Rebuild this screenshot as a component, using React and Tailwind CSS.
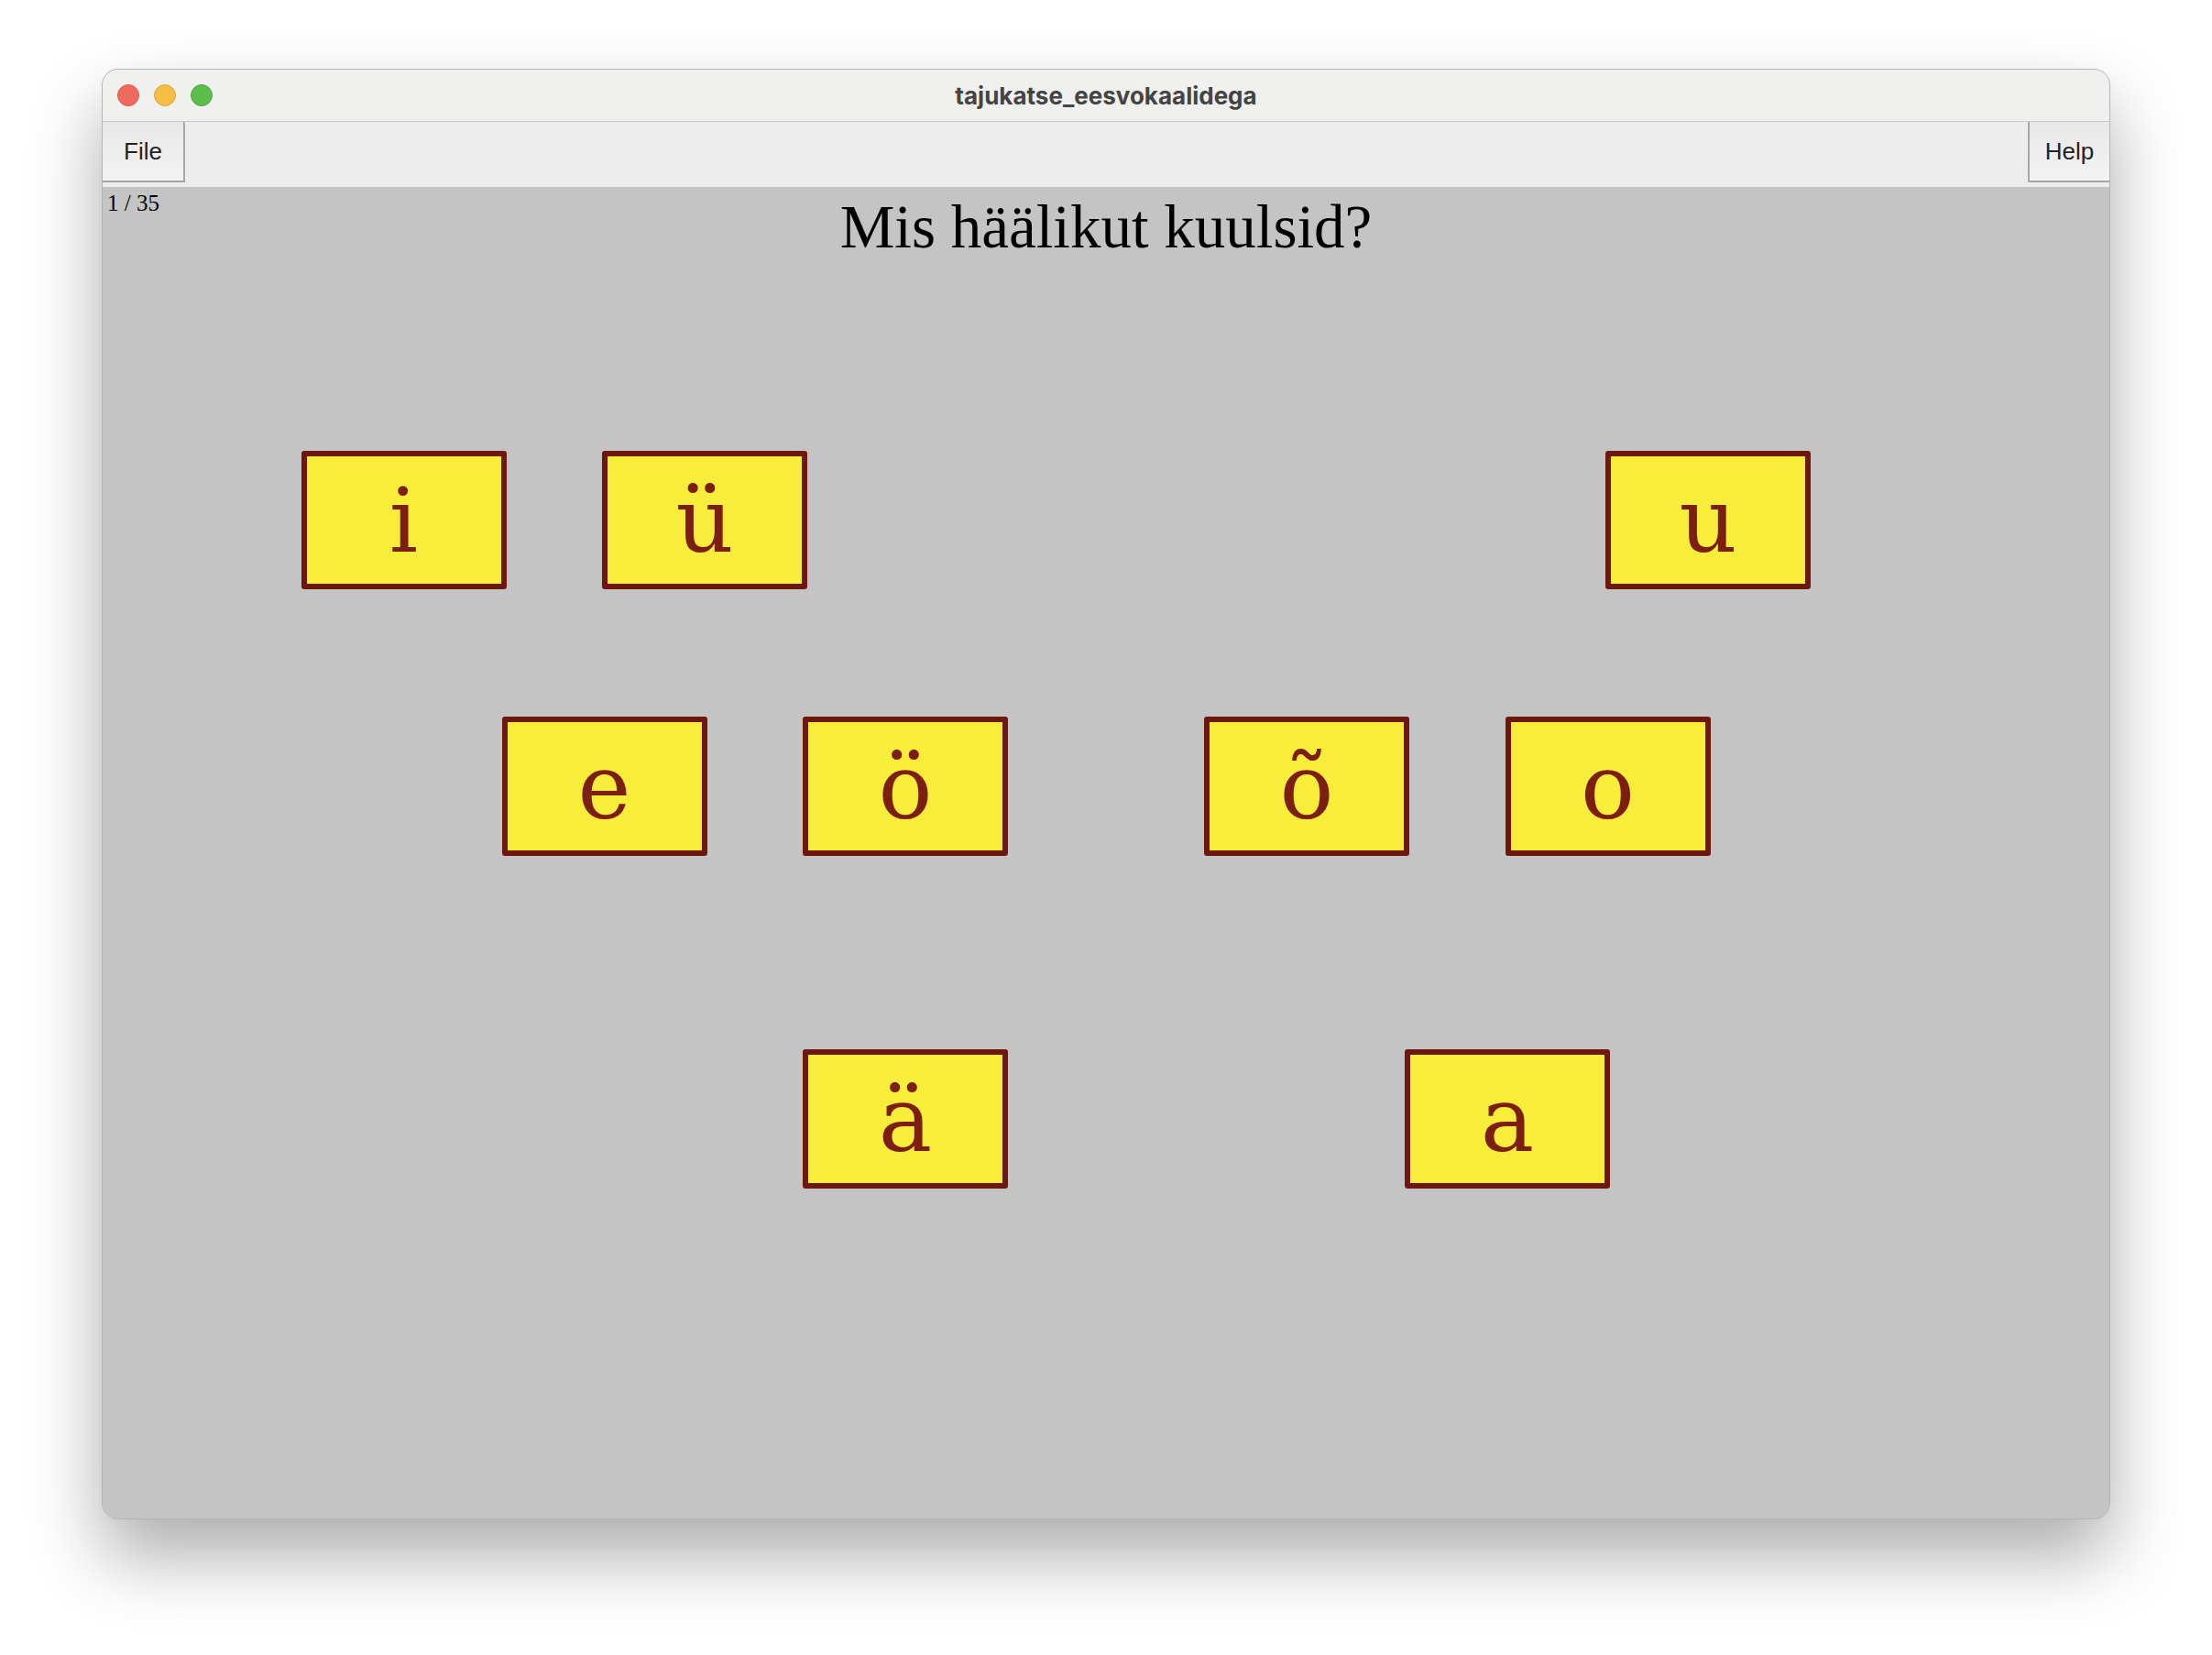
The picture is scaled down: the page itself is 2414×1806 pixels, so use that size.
const vowels = [
  { ch: 'i', pos: 'col-start-3 row-start-5' },
  { ch: 'ü', pos: 'col-start-6 row-start-5' },
  { ch: 'u', pos: 'col-start-16 row-start-5' },
  { ch: 'e', pos: 'col-start-5 row-start-9' },
  { ch: 'ö', pos: 'col-start-8 row-start-9' },
  { ch: 'õ', pos: 'col-start-12 row-start-9' },
  { ch: 'o', pos: 'col-start-15 row-start-9' },
  { ch: 'ä', pos: 'col-start-8 row-start-14' },
  { ch: 'a', pos: 'col-start-14 row-start-14' },
]

function VowelBox({ ch, pos }) {
  return (
    <div className={`${pos} col-span-2 row-span-2 mx-[-2.5px] my-[-3px] flex items-center justify-center rounded-[3px] border-[6px] border-[#6e170c] bg-[#f9ed3c]`}>
      <span className="pt-[2px] text-[98px] leading-none text-[#7c1f10] [font-family:'DejaVu_Serif',serif]">{ch}</span>
    </div>
  )
}

export default function App() {
  return (
    <div className="h-[1806px] w-full bg-white pl-[111px] pt-[75px]">
      <div className="flex h-[1583px] w-[2192px] flex-col overflow-hidden rounded-[18px] border border-[#b5b5b5] bg-[#c4c4c4] shadow-[0_40px_80px_rgba(0,0,0,0.33)]">
        {/* title bar */}
        <div className="relative flex h-[57px] shrink-0 items-center justify-center border-b border-[#c9c9c9] bg-[#f0f0ef]">
          <div className="absolute left-[16px] top-[16px] flex gap-[16px]">
            <span className="h-[24px] w-[24px] rounded-full border border-[#d95a4e] bg-[#ee6a5f]" />
            <span className="h-[24px] w-[24px] rounded-full border border-[#dca43c] bg-[#f6bd43]" />
            <span className="h-[24px] w-[24px] rounded-full border border-[#4aa83c] bg-[#5bbd4a]" />
          </div>
          <span className="text-[26px] font-bold text-[#444] [font-family:Inter,'Noto_Sans',sans-serif]">tajukatse_eesvokaalidega</span>
        </div>

        {/* menu bar */}
        <div className="flex h-[71px] shrink-0 items-start justify-between bg-[#ececec] [font-family:'Liberation_Sans',Arial,sans-serif]">
          <div className="flex h-[66px] w-[90px] items-center justify-center border-r-2 border-b-2 border-[#a6a6a6] bg-gradient-to-b from-[#e7e7e7] to-[#f4f4f4] text-[26px] text-[#222]">File</div>
          <div className="flex h-[66px] w-[89px] items-center justify-center border-l-2 border-b-2 border-[#a6a6a6] bg-gradient-to-b from-[#e7e7e7] to-[#f4f4f4] text-[26px] text-[#222]">Help</div>
        </div>

        {/* canvas */}
        <div className="grid min-h-0 flex-1 grid-cols-[repeat(20,minmax(0,1fr))] grid-rows-[repeat(20,minmax(0,1fr))] bg-[#c4c4c4] [font-family:'Liberation_Serif','Times_New_Roman',serif]">
          <div className="col-start-1 col-span-20 row-start-1 self-start mt-[10px] text-center text-[67px] leading-[67px] text-black">Mis häälikut kuulsid?</div>
          <div className="col-start-1 col-span-3 row-start-1 self-start ml-[5px] mt-[5px] text-[25px] leading-[25px] text-black">1 / 35</div>
          {vowels.map(v => <VowelBox key={v.ch} ch={v.ch} pos={v.pos} />)}
        </div>
      </div>
    </div>
  )
}
